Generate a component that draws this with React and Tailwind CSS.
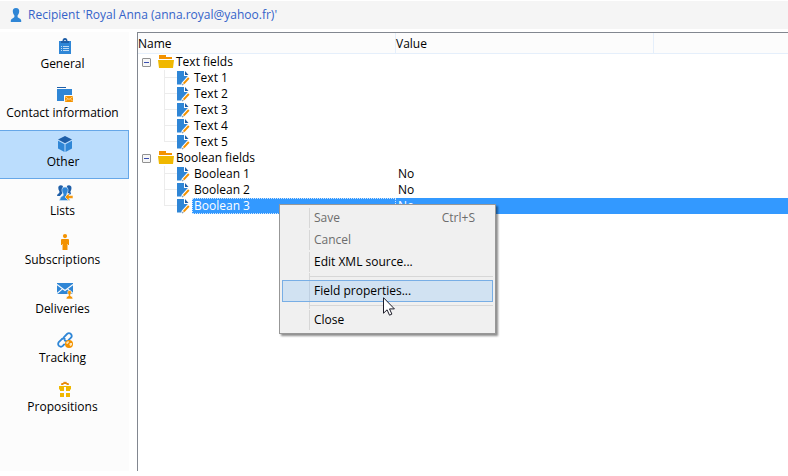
import React from "react";

const BLUE = "#2f86d6";
const NAVY = "#1f5fa8";
const ORANGE = "#f39200";
const YELLOW = "#f0b800";

function Svg({ children, className = "h-4 w-4" }) {
  return (
    <svg viewBox="0 0 16 16" className={`${className} shrink-0`} aria-hidden="true">
      {children}
    </svg>
  );
}

const PersonIcon = () => (
  <Svg>
    <path fill={BLUE} d="M8 1C5.6 1 4.6 2.6 4.8 4.8C5 6.6 5.8 7.6 6.4 8.4V10C5.8 11.2 3 11.4 2.8 13.4V15H13.2V13.4C13 11.4 10.2 11.2 9.6 10V8.4C10.2 7.6 11 6.6 11.2 4.8C11.4 2.6 10.4 1 8 1Z" />
  </Svg>
);

const ClipboardIcon = () => (
  <Svg>
    <path fill={BLUE} d="M2 3H14V16H2Z" />
    <path fill={NAVY} d="M4 5V3H5.5C5.5 1 6.5 0 8 0S10.5 1 10.5 3H12V5Z" />
    <path fill="#fff" d="M7 2H9V3H7ZM4 8H5V9H4ZM6 8H12V9H6ZM4 10H5V11H4ZM6 10H12V11H6ZM4 12H5V13H4ZM6 12H12V13H6Z" opacity=".7" />
  </Svg>
);

const FolderMailIcon = () => (
  <Svg>
    <path fill={NAVY} d="M0 0H9V1H0Z" />
    <path fill={BLUE} d="M0 2H15V8H7V14H0Z" />
    <path fill={ORANGE} d="M8 9H16V15H8Z" />
    <path d="M8 9.5L12 12.5L16 9.5M8 14.5L10.8 11.7M16 14.5L13.2 11.7" stroke="#ffe0aa" strokeWidth=".8" fill="none" />
  </Svg>
);

const CubeIcon = () => (
  <Svg>
    <path fill={NAVY} d="M8 0L15 3.6L8 7.2L1 3.6Z" />
    <path fill={BLUE} d="M1 4.8L7.5 8.2V16L1 12.5ZM15 4.8L8.5 8.2V16L15 12.5Z" />
  </Svg>
);

const GroupIcon = () => (
  <Svg>
    <path fill={NAVY} d="M1.5 1.5Q3.5-.8 6 1L5 5L5.5 8L3 11H0Q0 9 2.2 8L2.5 6.5Q.8 4 1.5 1.5ZM14.2 1.5Q12.2-.8 9.8 1L11 5L10.5 8L12 10L14 9L13.4 6.5Q15 4 14.2 1.5Z" />
    <path fill={BLUE} stroke="#d8eafa" strokeWidth=".6" d="M8 2C5.5 2 4.6 3.8 5 6.2L6.2 9V10.5Q3 11.5 2.5 15.5H13Q12.8 11.5 9.8 10.5V9L11 6.2C11.4 3.8 10.5 2 8 2Z" />
    <path fill={ORANGE} stroke="#fcfcfc" strokeWidth=".6" d="M8 12L12 8V10.6H16V13.4H12V16Z" />
  </Svg>
);

const SubscriberIcon = () => (
  <Svg>
    <circle cx="8" cy="2.1" r="2.1" fill={ORANGE} />
    <path fill={ORANGE} d="M5 5H11Q12 5 12 6V11H11V10H10.5V16H5.5V10H5V11H4V6Q4 5 5 5Z" />
  </Svg>
);

const MailPersonIcon = () => (
  <Svg>
    <path fill={BLUE} d="M0 0H16V11H0Z" />
    <path d="M0 1.5L8 7.5L16 1.5M0 10.5L5.5 5.8M16 10.5L10.5 5.8" stroke="#fcfcfc" strokeWidth="1.1" fill="none" />
    <path fill={ORANGE} stroke="#fcfcfc" strokeWidth=".6" d="M12.5 7.5C10.8 7.5 10.4 9 10.8 10.4L11.6 12V12.8Q9.2 13.4 9 16H16Q15.8 13.4 13.4 12.8V12L14.2 10.4C14.6 9 14.2 7.5 12.5 7.5Z" />
  </Svg>
);

const LinkIcon = () => (
  <Svg>
    <g fill="none" stroke={BLUE} strokeWidth="1.8" strokeLinecap="round">
      <path d="M6.8 5.3L10 2Q11.8.4 13.7 1.8Q15.6 3.7 14 5.7L11.2 8.4Q9.5 9.7 7.8 8.6" />
      <path d="M7.8 7Q6.2 5.9 4.6 7.3L1.8 10.1Q.4 12.1 2 13.9Q4 15.5 5.8 13.9L7.2 12.4" />
    </g>
    <circle cx="12" cy="12" r="4" fill={ORANGE} />
    <path fill="#ffe5b8" d="M9.5 10L11.5 9L12 10.3L10.5 12L9.2 11.6ZM13 11H15V13L13.3 14.3L12.3 12.4Z" />
  </Svg>
);

const GiftIcon = () => (
  <Svg>
    <path fill="#e88b0c" d="M4 4L4.5 2H6L7 .5L8 1.2L9 .5L10 2H11.5L12 4H10L9 3H7L6 4Z" />
    <path fill={YELLOW} d="M2 5H14V10H2ZM3 12H7V16H3ZM9 12H13V16H9Z" />
    <path fill="#fcfcfc" d="M7 6H9V10H7ZM2 8.5H3V10H2ZM13 8.5H14V10H13Z" />
  </Svg>
);

const FolderIcon = () => (
  <Svg>
    <path fill={ORANGE} d="M1 1H8V3H14V5H1Z" />
    <path fill={YELLOW} d="M0 6H16L15 14H1Z" />
  </Svg>
);

const FieldIcon = () => (
  <svg viewBox="0 0 14 16" className="h-4 w-3.5 shrink-0" aria-hidden="true">
    <path fill={BLUE} d="M0 1H7V6H11V9L6.5 14.5H0Z" />
    <path fill={NAVY} d="M8 1L11.5 5H8Z" />
    <path fill="#fff" d="M4.5 13L10.8 6L13.5 8.3L7 16H4.5Z" />
    <path d="M6.6 13.6L11.8 8" stroke={ORANGE} strokeWidth="1.9" fill="none" />
    <path fill="#7a8794" d="M5 15.5L5.4 13.6L6.8 14.8Z" />
  </svg>
);

const sections = [
  { label: "General", Icon: ClipboardIcon },
  { label: "Contact information", Icon: FolderMailIcon },
  { label: "Other", Icon: CubeIcon, active: true },
  { label: "Lists", Icon: GroupIcon },
  { label: "Subscriptions", Icon: SubscriberIcon },
  { label: "Deliveries", Icon: MailPersonIcon },
  { label: "Tracking", Icon: LinkIcon },
  { label: "Propositions", Icon: GiftIcon },
];

const groups = [
  {
    name: "Text fields",
    fields: [
      { name: "Text 1" },
      { name: "Text 2" },
      { name: "Text 3" },
      { name: "Text 4" },
      { name: "Text 5" },
    ],
  },
  {
    name: "Boolean fields",
    fields: [
      { name: "Boolean 1", value: "No" },
      { name: "Boolean 2", value: "No" },
      { name: "Boolean 3", value: "No", selected: true },
    ],
  },
];

function Sidebar() {
  return (
    <nav className="flex w-[129px] shrink-0 flex-col bg-[#fcfcfc]">
      {sections.map(({ label, Icon, active }) => (
        <button
          key={label}
          type="button"
          aria-current={active ? "page" : undefined}
          className={`flex h-[49px] flex-col items-center gap-0.5 border pt-[5px] ${
            active ? "border-l-0 border-[#66a7e8] bg-[#bbddfd] pt-1.5 pl-0.5" : "border-transparent"
          }`}
        >
          <Icon />
          <span className="pr-1 leading-4 whitespace-nowrap">{label}</span>
        </button>
      ))}
    </nav>
  );
}

function GroupRow({ name }) {
  return (
    <tr className="h-4">
      <td className="p-0">
        <div className="flex h-4 items-center pl-1">
          <button
            type="button"
            aria-label={`Collapse ${name}`}
            className="flex h-[9px] w-[9px] items-center justify-center rounded-[1px] border border-[#919191] bg-[#f6f6f6]"
          >
            <span className="h-px w-[5px] bg-[#3b4fb0]" />
          </button>
          <span className="ml-[7px] flex items-center gap-0.5">
            <FolderIcon />
            {name}
          </span>
        </div>
      </td>
      <td className="p-0" />
      <td className="p-0" />
    </tr>
  );
}

function FieldRow({ field, last }) {
  const { name, value, selected } = field;
  const fill = selected ? "bg-[#3399ff] text-white" : "";
  return (
    <tr className="h-4">
      <td className="p-0">
        <div className="flex h-4 items-center pl-[26px]">
          <span className="flex h-4 w-[13px] shrink-0 flex-col">
            <span className="h-2 border-b border-l border-[#ececec]" />
            <span className={`h-2 ${last ? "" : "border-l border-[#ececec]"}`} />
          </span>
          <FieldIcon />
          <span
            className={`ml-px flex h-4 grow items-center border pl-px ${
              selected ? "border-dotted border-[#cfe6ff] bg-[#3399ff] text-white" : "border-transparent"
            }`}
          >
            {name}
          </span>
        </div>
      </td>
      <td className={`p-0 pl-0.5 ${fill}`}>{value}</td>
      <td className={`p-0 ${fill}`} />
    </tr>
  );
}

function FieldTable() {
  return (
    <main className="min-w-0 grow border-t border-l border-[#828790] bg-white">
      <table className="w-full table-fixed border-separate border-spacing-0 text-left leading-4">
        <colgroup>
          <col className="w-[258px]" />
          <col className="w-[258px]" />
          <col />
        </colgroup>
        <thead>
          <tr className="h-[21px] bg-[#fcfcfc]">
            <th className="border-r border-b border-[#e5effb] p-0 pt-0.5 font-normal">Name</th>
            <th className="border-r border-b border-[#e5effb] p-0 pt-0.5 font-normal">Value</th>
            <th className="border-b border-[#e5effb] p-0" />
          </tr>
        </thead>
        <tbody>
          {groups.map((group) => (
            <React.Fragment key={group.name}>
              <GroupRow name={group.name} />
              {group.fields.map((field, i) => (
                <FieldRow key={field.name} field={field} last={i === group.fields.length - 1} />
              ))}
            </React.Fragment>
          ))}
        </tbody>
      </table>
    </main>
  );
}

function MenuItem({ label, shortcut, disabled, active }) {
  return (
    <button
      type="button"
      role="menuitem"
      disabled={disabled}
      className={`flex h-[22px] w-full border ${
        active ? "border-[#78aee5] bg-[#d1e2f2]" : "border-transparent"
      } ${disabled ? "text-[#6d6d6d]" : "text-black"}`}
    >
      <span className={`h-full w-[27px] shrink-0 border-r ${active ? "border-[#bfd0e2]" : "border-[#d7d7d7]"}`} />
      <span className="flex h-full grow items-center justify-between pr-[17px] pl-1">
        <span>{label}</span>
        {shortcut && <span>{shortcut}</span>}
      </span>
    </button>
  );
}

function MenuSeparator() {
  return (
    <div role="separator" className="flex h-[7px] items-center">
      <span className="h-full w-7 shrink-0 border-r border-[#d7d7d7]" />
      <span className="h-px grow bg-[#d7d7d7]" />
    </div>
  );
}

function ContextMenu() {
  return (
    <div
      role="menu"
      className="absolute top-[204px] left-[279px] w-[217px] border border-[#979797] bg-[#f0f0f0] p-0.5 shadow-[2px_2px_2px_rgba(0,0,0,0.45)]"
    >
      <MenuItem label="Save" shortcut="Ctrl+S" disabled />
      <MenuItem label="Cancel" disabled />
      <MenuItem label="Edit XML source..." />
      <MenuSeparator />
      <MenuItem label="Field properties..." active />
      <MenuSeparator />
      <MenuItem label="Close" />
      <svg viewBox="0 0 12 19" className="absolute top-[92px] left-[103px] h-[19px] w-3" aria-hidden="true">
        <path
          d="M.5.7V16.2L4.1 12.8L6.5 18.2L8.9 17.1L6.5 11.9H11.4Z"
          fill="#fff"
          stroke="#1c1c28"
          strokeWidth="1"
        />
      </svg>
    </div>
  );
}

export default function App() {
  return (
    <div className="relative flex min-h-screen flex-col bg-white pb-[5px] font-['Open_Sans','Noto_Sans',sans-serif] text-[12px] leading-4 text-black">
      <header className="mt-px mb-[3px] flex h-7 items-center gap-1 bg-[#f5f5f5] pl-2 text-[#3463c9]">
        <PersonIcon />
        <h1>Recipient 'Royal Anna (anna.royal@yahoo.fr)'</h1>
      </header>
      <div className="flex grow gap-2">
        <Sidebar />
        <FieldTable />
      </div>
      <ContextMenu />
    </div>
  );
}
